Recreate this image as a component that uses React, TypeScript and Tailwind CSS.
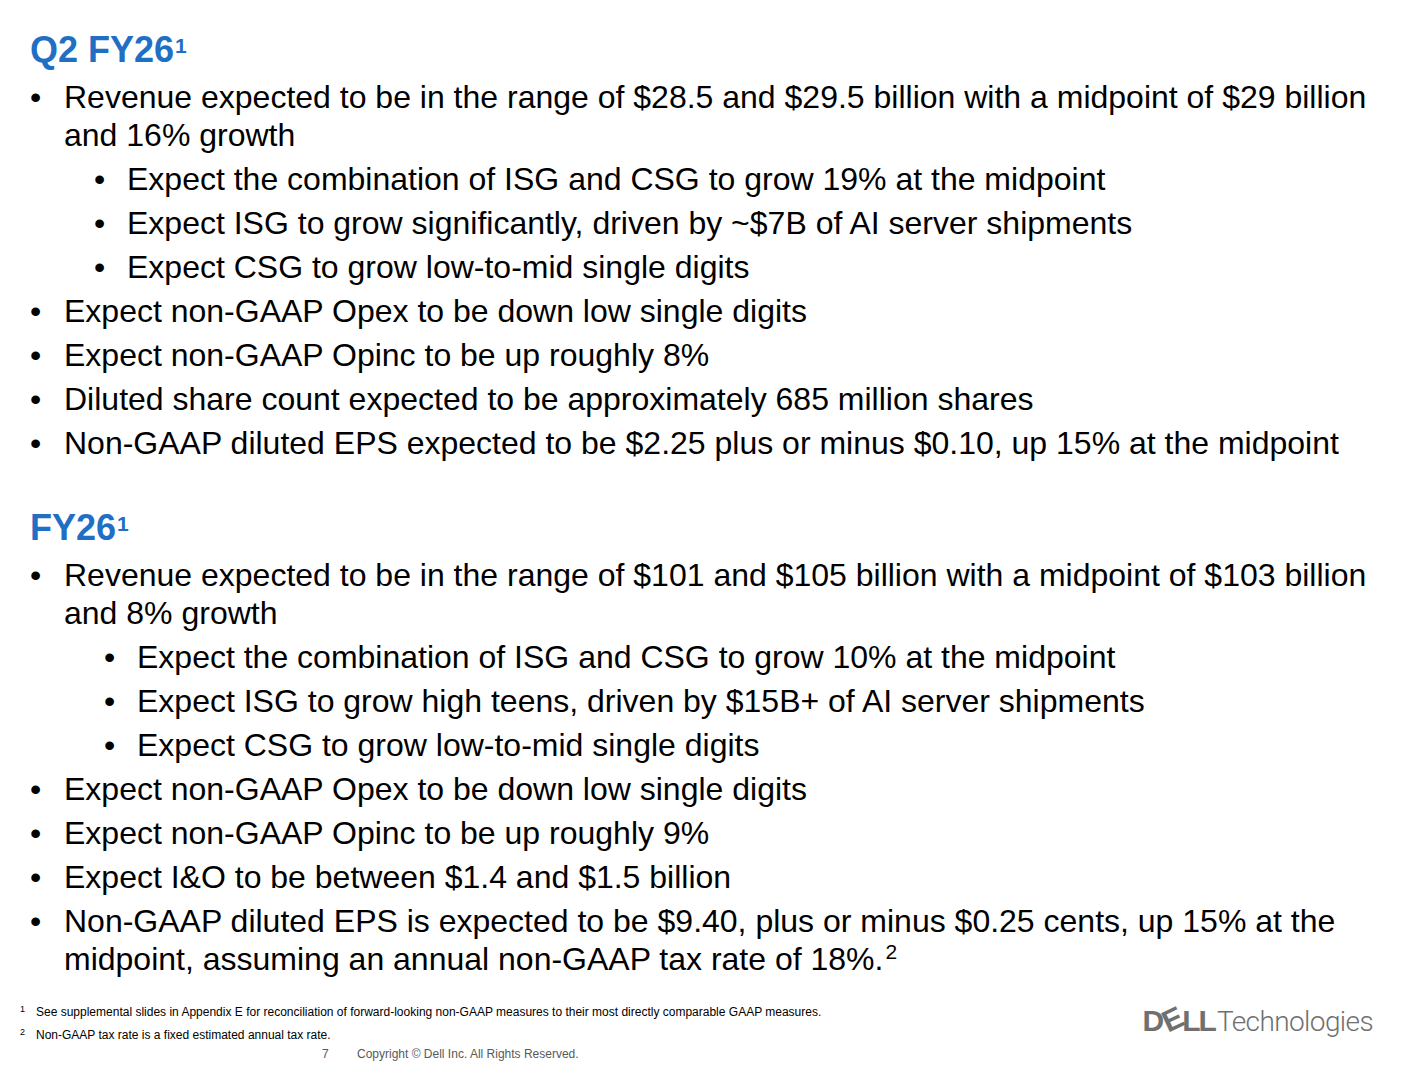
import React from "react";

type Item = { text: React.ReactNode; subs?: React.ReactNode[] };

const Q2: Item[] = [
  {
    text: "Revenue expected to be in the range of $28.5 and $29.5 billion with a midpoint of $29 billion and 16% growth",
    subs: [
      "Expect the combination of ISG and CSG to grow 19% at the midpoint",
      "Expect ISG to grow significantly, driven by ~$7B of AI server shipments",
      "Expect CSG to grow low-to-mid single digits",
    ],
  },
  { text: "Expect non-GAAP Opex to be down low single digits" },
  { text: "Expect non-GAAP Opinc to be up roughly 8%" },
  { text: "Diluted share count expected to be approximately 685 million shares" },
  { text: "Non-GAAP diluted EPS expected to be $2.25 plus or minus $0.10, up 15% at the midpoint" },
];

const FY: Item[] = [
  {
    text: "Revenue expected to be in the range of $101 and $105 billion with a midpoint of $103 billion and 8% growth",
    subs: [
      "Expect the combination of ISG and CSG to grow 10% at the midpoint",
      "Expect ISG to grow high teens, driven by $15B+ of AI server shipments",
      "Expect CSG to grow low-to-mid single digits",
    ],
  },
  { text: "Expect non-GAAP Opex to be down low single digits" },
  { text: "Expect non-GAAP Opinc to be up roughly 9%" },
  { text: "Expect I&O to be between $1.4 and $1.5 billion" },
  {
    text: (
      <>
        Non-GAAP diluted EPS is expected to be $9.40, plus or minus $0.25 cents, up 15% at the midpoint, assuming an
        annual non-GAAP tax rate of 18%.<span className="text-[21px] leading-none align-[11px] ml-[2px]">2</span>
      </>
    ),
  },
];

function Bullet({ children, sub, subIndent }: { children: React.ReactNode; sub?: boolean; subIndent?: string }) {
  return (
    <li className={`flex mt-[6px] leading-[38px] ${sub ? subIndent : ""}`}>
      <span className={`shrink-0 ${sub ? "w-[33px]" : "w-[34px]"}`}>•</span>
      <span>{children}</span>
    </li>
  );
}

function Section({ title, items, subIndent }: { title: string; items: Item[]; subIndent: string }) {
  return (
    <section>
      <h2 className="text-[36px] font-bold text-[#1f6fc5] leading-[44px]">
        {title}
        <span className="text-[21px] leading-none align-[9px] ml-[1px]">1</span>
      </h2>
      <ul className="text-[32px] text-black">
        {items.map((it, i) => (
          <React.Fragment key={i}>
            <Bullet>{it.text}</Bullet>
            {it.subs?.map((s, j) => (
              <Bullet key={j} sub subIndent={subIndent}>
                {s}
              </Bullet>
            ))}
          </React.Fragment>
        ))}
      </ul>
    </section>
  );
}

function DellLogo() {
  return (
    <div className="flex items-end text-[#707070] leading-none">
      <div className="flex items-end font-bold text-[30px] tracking-[-2px]">
        <span>D</span>
        <span className="inline-block -rotate-[25deg] -translate-y-[1px] mx-[1px]">E</span>
        <span>LL</span>
      </div>
      <span className="text-[28px] font-light tracking-[-0.6px] ml-[2px]" style={{ fontFamily: 'Roboto, "Open Sans", sans-serif' }}>
        Technologies
      </span>
    </div>
  );
}

export default function App() {
  return (
    <div
      className="w-[1413px] h-[1066px] bg-white overflow-hidden flex flex-col"
      style={{ fontFamily: '"Liberation Sans", Arial, Helvetica, sans-serif' }}
    >
      <div className="pl-[30px] pr-[30px] pt-[28px] flex flex-col gap-[44px]">
        <Section title="Q2 FY26" items={Q2} subIndent="pl-[64px]" />
        <Section title="FY26" items={FY} subIndent="pl-[74px]" />
      </div>

      <footer className="mt-auto flex justify-between pl-[20px] pr-[40px] pb-[4px]">
        <div className="text-[12px] leading-[16px] text-black">
          <div className="flex">
            <span className="w-[16px] text-[9px] leading-[10px]">1</span>
            <span>See supplemental slides in Appendix E for reconciliation of forward-looking non-GAAP measures to their most directly comparable GAAP measures.</span>
          </div>
          <div className="flex mt-[7px]">
            <span className="w-[16px] text-[9px] leading-[10px]">2</span>
            <span>Non-GAAP tax rate is a fixed estimated annual tax rate.</span>
          </div>
          <div className="flex mt-[3px] pl-[302px] text-[#595959]">
            <span className="w-[35px]">7</span>
            <span>Copyright © Dell Inc. All Rights Reserved.</span>
          </div>
        </div>
        <div className="pt-[2px]">
          <DellLogo />
        </div>
      </footer>
    </div>
  );
}
